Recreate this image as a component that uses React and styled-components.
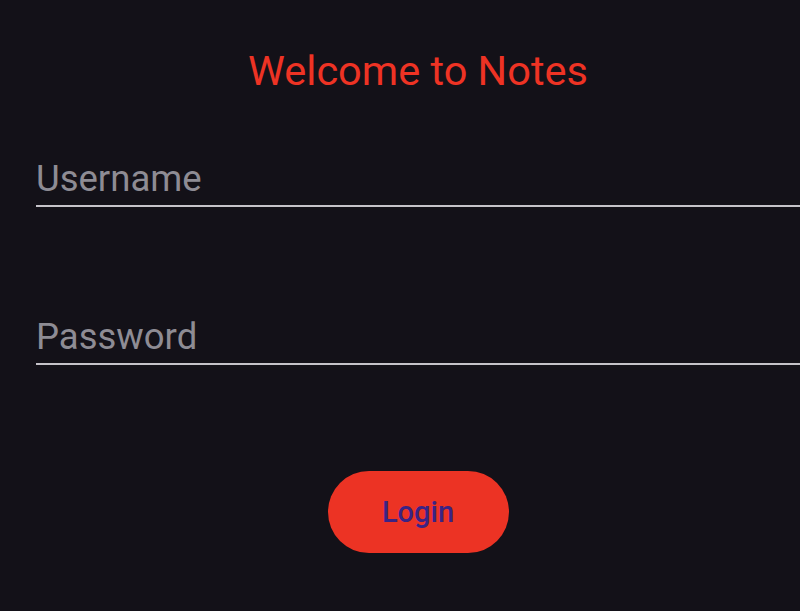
import styled, { createGlobalStyle } from "styled-components";

const Global = createGlobalStyle`
  html, body {
    margin: 0;
    padding: 0;
    background: #131118;
  }
  body {
    font-family: Roboto, "Noto Sans", sans-serif;
  }
`;

export default function App() {
  return (
    <>
      <Global />
      <Screen>
        <Title>Welcome to Notes</Title>
        <Field placeholder="Username" />
        <Field type="password" placeholder="Password" />
        <LoginButton>Login</LoginButton>
      </Screen>
    </>
  );
}

//style
const Screen = styled.div`
  display: flex;
  flex-direction: column;
  align-items: center;
  min-height: 611px;
  box-sizing: border-box;
  padding: 46px 0 0 36px;
`;

const Title = styled.h1`
  margin: 0 0 55px;
  font-size: 41.5px;
  font-weight: 400;
  line-height: 50px;
  color: #ee3324;
`;

const Field = styled.input`
  align-self: stretch;
  box-sizing: border-box;
  height: 56px;
  margin: 0 0 102px;
  padding: 0;
  background: transparent;
  border: none;
  border-bottom: 2px solid #c5c3c9;
  font-family: Roboto, sans-serif;
  font-size: 36.5px;
  color: #e6e4ea;
  outline: none;

  &::placeholder {
    color: #8e8c94;
  }
`;

const LoginButton = styled.button`
  width: 181px;
  height: 82px;
  margin-top: 4px;
  border: none;
  border-radius: 41px;
  background: #ec3324;
  color: #3b2384;
  font-family: Roboto, sans-serif;
  font-size: 29px;
  font-weight: 500;
  cursor: pointer;
`;
